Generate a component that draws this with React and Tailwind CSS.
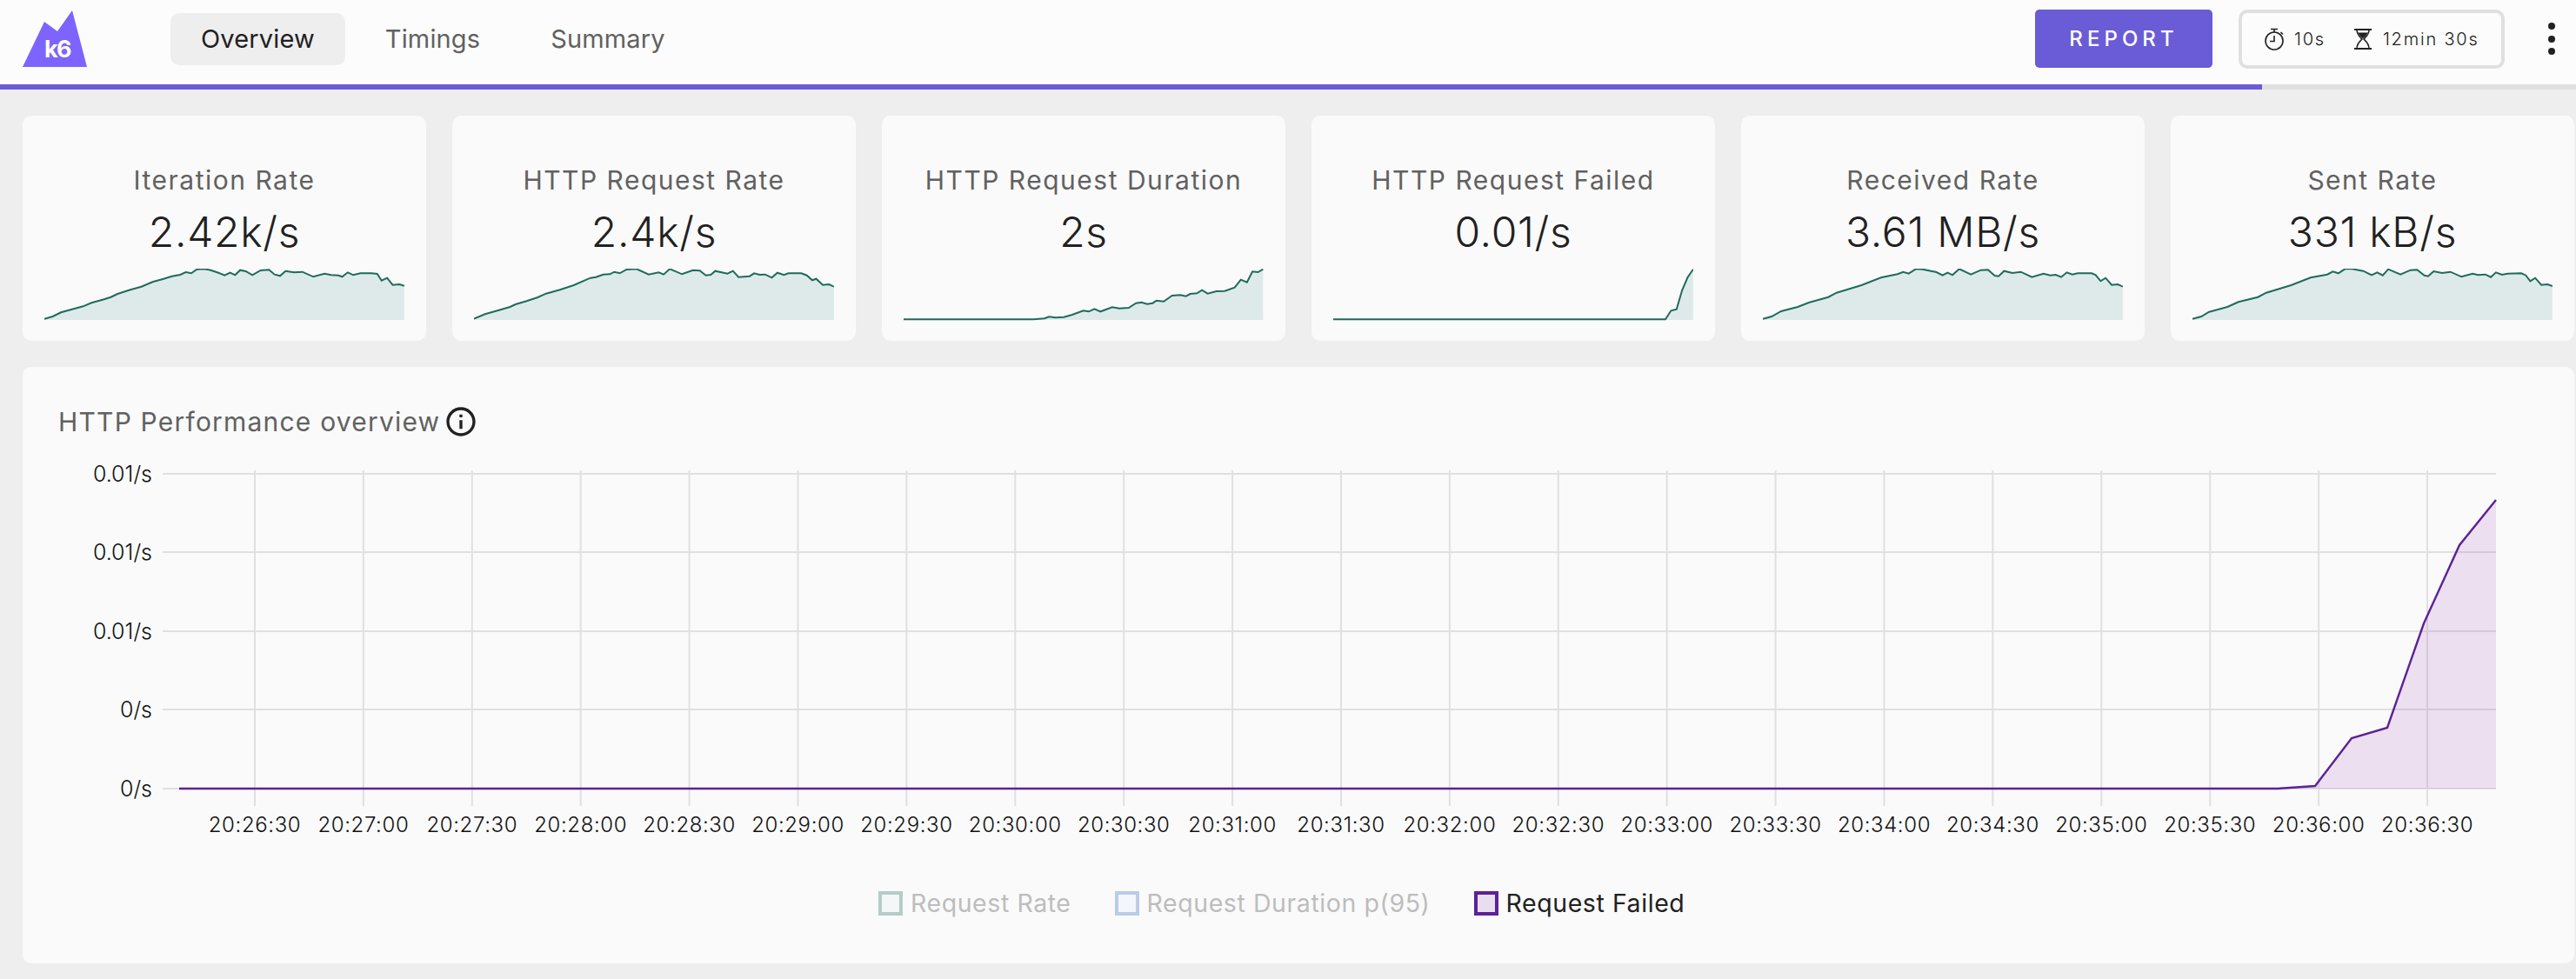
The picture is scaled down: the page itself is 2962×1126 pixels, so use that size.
import { MdInfoOutline } from "react-icons/md";

// sparkline points, measured off the picture: [x, y] in a 648x176 box
const ramp = (pts, dx) => pts.map(([x, y]) => [x - dx, y]);

const cards = [
  {
    title: "Iteration Rate",
    value: "2.42k/s",
    points: ramp([[80,738],[95,730],[110,716],[130,705],[150,695],[165,683],[185,672],[200,663],[212,652],[235,638],[255,627],[275,611],[295,600],[310,591],[325,586],[335,577],[345,581],[355,567],[368,566],[380,570],[395,580],[405,588],[415,579],[424,587],[433,570],[443,574],[455,587],[470,571],[485,569],[495,585],[505,590],[515,573],[530,578],[545,576],[565,593],[585,582],[597,587],[610,588],[617,593],[627,578],[637,587],[650,581],[670,581],[680,583],[688,606],[698,597],[708,621],[720,619],[729,624]], 80),
  },
  {
    title: "HTTP Request Rate",
    value: "2.4k/s",
    points: ramp([[855,738],[875,722],[900,708],[920,697],[930,688],[950,677],[970,664],[985,651],[1010,638],[1035,622],[1065,597],[1075,594],[1088,585],[1100,584],[1108,576],[1118,581],[1130,568],[1148,566],[1170,585],[1188,578],[1197,585],[1208,566],[1230,584],[1250,570],[1262,572],[1273,588],[1282,586],[1290,573],[1312,582],[1322,573],[1332,594],[1352,591],[1360,581],[1370,586],[1380,585],[1392,596],[1402,579],[1414,587],[1422,581],[1445,581],[1455,588],[1465,605],[1472,600],[1484,621],[1495,619],[1504,627]], 855),
  },
  {
    title: "HTTP Request Duration",
    value: "2s",
    points: ramp([[61,740],[295,740],[315,737],[323,731],[335,734],[350,732],[365,724],[385,710],[395,713],[405,704],[416,713],[437,698],[450,702],[467,700],[480,684],[490,681],[500,687],[510,684],[517,675],[530,678],[545,658],[560,656],[570,660],[578,652],[590,650],[599,639],[609,651],[625,643],[640,642],[658,630],[669,603],[680,612],[690,575],[700,577],[709,567]], 61),
  },
  {
    title: "HTTP Request Failed",
    value: "0.01/s",
    points: ramp([[836,740],[1435,740],[1445,710],[1455,705],[1465,640],[1475,595],[1485,567]], 836),
  },
  {
    title: "Received Rate",
    value: "3.61 MB/s",
    points: ramp([[102,738],[118,730],[135,712],[165,697],[185,682],[220,663],[235,648],[280,622],[315,596],[345,584],[355,576],[365,582],[378,566],[390,567],[415,577],[426,588],[435,579],[444,587],[456,566],[477,585],[495,570],[508,569],[520,589],[527,591],[537,573],[552,580],[567,576],[587,594],[608,582],[620,588],[630,586],[640,594],[650,578],[660,585],[670,581],[695,581],[702,587],[711,608],[720,597],[731,621],[742,619],[751,627]], 102),
  },
  {
    title: "Sent Rate",
    value: "331 kB/s",
    points: ramp([[877,738],[893,730],[907,714],[940,697],[960,680],[995,663],[1010,648],[1055,622],[1090,596],[1120,585],[1130,575],[1140,581],[1152,566],[1165,566],[1185,573],[1200,587],[1210,578],[1220,588],[1230,567],[1252,585],[1270,570],[1282,569],[1295,588],[1302,591],[1312,574],[1327,580],[1342,576],[1362,593],[1382,582],[1392,587],[1405,585],[1415,594],[1424,578],[1435,586],[1445,582],[1470,581],[1478,588],[1486,608],[1495,597],[1506,621],[1517,619],[1526,625]], 877),
  },
];

const timeLabels = [
  "20:26:30", "20:27:00", "20:27:30", "20:28:00", "20:28:30", "20:29:00", "20:29:30",
  "20:30:00", "20:30:30", "20:31:00", "20:31:30", "20:32:00", "20:32:30", "20:33:00",
  "20:33:30", "20:34:00", "20:34:30", "20:35:00", "20:35:30", "20:36:00", "20:36:30",
];

const gridRows = [
  { y: 545, label: "0.01/s" },
  { y: 635, label: "0.01/s" },
  { y: 726, label: "0.01/s" },
  { y: 816, label: "0/s" },
  { y: 907, label: "0/s" },
];

const failedLine = "206,907 2619,907 2662,904 2704,849 2745,837 2787,717 2828,627 2870,575";

function Sparkline({ points }) {
  const xy = points.map(([x, y]) => `${(x / 1.568).toFixed(1)},${((y - 565) / 3).toFixed(1)}`);
  const first = (points[0][0] / 1.568).toFixed(1);
  const last = (points[points.length - 1][0] / 1.568).toFixed(1);
  return (
    <svg viewBox="0 0 414 60" className="block w-[414px] h-[60px]">
      <polygon points={`${first},59 ${xy.join(" ")} ${last},59`} fill="#deeaea" />
      <polyline points={xy.join(" ")} fill="none" stroke="#1f6b5a" strokeWidth="2" />
    </svg>
  );
}

function StatCard({ title, value, points }) {
  return (
    <div className="flex flex-col items-center h-[259px] rounded-[10px] bg-[#fafafa] pt-[55px]">
      <div className="h-[38px] leading-[38px] text-[30px] tracking-[0.05em] text-[#616161]">{title}</div>
      <div className="mt-[11px] h-[60px] leading-[60px] text-[48px] font-[350] tracking-[0.015em] text-[#212121]">{value}</div>
      <div className="mt-[12px] w-[414px]">
        <Sparkline points={points} />
      </div>
    </div>
  );
}

function PerformanceChart() {
  return (
    <svg viewBox="26 525 2934 450" className="block w-[2934px] h-[450px]">
      {gridRows.map((row, i) => (
        <g key={i}>
          <line x1="187" x2="2870" y1={row.y} y2={row.y} stroke="#e0e0e0" strokeWidth="2" />
          <text x="175" y={row.y + 8.5} textAnchor="end" fontSize="25" fontWeight="350" fill="#111">{row.label}</text>
        </g>
      ))}
      {timeLabels.map((t, i) => {
        const x = 293 + i * 124.9;
        return (
          <g key={t}>
            <line x1={x} x2={x} y1="541" y2="927" stroke="#e0e0e0" strokeWidth="2" />
            <text x={x} y="957" textAnchor="middle" fontSize="24" fontWeight="350" letterSpacing="0.6" fill="#111">{t}</text>
          </g>
        );
      })}
      <polygon points={`${failedLine} 2870,907`} fill="#8e24aa" fillOpacity="0.12" />
      <polyline points={failedLine} fill="none" stroke="#5e2196" strokeWidth="2.4" />
    </svg>
  );
}

function LegendItem({ label, swatch, text }) {
  return (
    <div className="flex items-center gap-[9px]">
      <span className={`w-[28px] h-[28px] border-[4px] ${swatch}`} />
      <span className={`text-[28.5px] leading-[34px] tracking-[0.02em] ${text}`}>{label}</span>
    </div>
  );
}

function StopwatchIcon() {
  return (
    <svg viewBox="0 0 24 28" className="w-[24px] h-[28px] shrink-0" fill="none" stroke="#212121" strokeWidth="1.6">
      <circle cx="12" cy="16" r="10" />
      <path d="M8 2.5h8M12 3v3M19.5 6l2.500 2.500M12 10v6.500H7" />
    </svg>
  );
}

function HourglassIcon() {
  return (
    <svg viewBox="0 0 20 24" className="w-[20px] h-[24px] shrink-0" fill="none" stroke="#212121" strokeWidth="1.5">
      <path d="M0 1h20M0 23h20" strokeWidth="2" />
      <path d="M3 1c0 6 3 8 6 11-3 3-6 5-6 11M17 1c0 6-3 8-6 11 3 3 6 5 6 11" />
      <path d="M4.500 4.500h11c-1 3-3 4.500-5.500 7-2.500-2.500-4.500-4-5.500-7z" fill="#212121" stroke="none" />
    </svg>
  );
}

export default function App() {
  return (
    <div className="min-h-[1126px] bg-[#eeeeee] font-['Inter','Noto_Sans',sans-serif]">
      {/* Header */}
      <header className="flex items-center h-[97px] pb-[8px] pl-[26px] bg-[#fcfcfc]">
        <svg viewBox="0 0 74 65" className="w-[74px] h-[65px] shrink-0">
          <polygon points="0,65 25,13 40,24 57,0 74,65" fill="#7d64ff" />
          <text x="40" y="54" textAnchor="middle" fontSize="27" fontWeight="700" letterSpacing="-1.500" fill="#fff">k6</text>
        </svg>

        <nav className="flex items-center gap-[11px] ml-[96px] text-[29px] tracking-[0.005em]">
          <a className="flex items-center h-[60px] px-[35px] rounded-[10px] bg-[#eeeeee] text-[#212121]">Overview</a>
          <a className="flex items-center h-[60px] px-[35px] text-[#616161]">Timings</a>
          <a className="flex items-center h-[60px] px-[35px] text-[#616161]">Summary</a>
        </nav>

        <div className="flex items-center ml-auto">
          <button className="w-[204px] h-[67px] rounded-[5px] bg-[#6a5bd6] text-white text-[24px] font-medium tracking-[0.21em]">
            REPORT
          </button>
          <div className="flex items-center w-[306px] h-[68px] ml-[30px] pl-[25px] rounded-[10px] border-[4px] border-[#e0e0e0] text-[20px] font-[350] tracking-[0.09em] text-[#212121]">
            <StopwatchIcon />
            <span className="ml-[11px]">10s</span>
            <span className="ml-[33px]"><HourglassIcon /></span>
            <span className="ml-[13px]">12min 30s</span>
          </div>
          <div className="flex flex-col gap-[6.5px] ml-[50px] mr-[24px]">
            <span className="w-[8px] h-[8px] rounded-full bg-[#212121]" />
            <span className="w-[8px] h-[8px] rounded-full bg-[#212121]" />
            <span className="w-[8px] h-[8px] rounded-full bg-[#212121]" />
          </div>
        </div>
      </header>

      {/* Test progress */}
      <div className="h-[6px] bg-[#e0e0e0]">
        <div className="h-full w-[2601px] bg-[#6a5bd6]" />
      </div>

      <main className="pt-[30px] pl-[26px] pr-[2px] pb-[18px]">
        <div className="grid grid-cols-6 gap-[30px]">
          {cards.map((card) => (
            <StatCard key={card.title} {...card} />
          ))}
        </div>

        <section className="mt-[30px] h-[686px] rounded-[10px] bg-[#fafafa] pt-[46px]">
          <div className="flex items-center h-[34px] pl-[41px] text-[#616161]">
            <span className="text-[30px] tracking-[0.04em]">HTTP Performance overview</span>
            <MdInfoOutline size={40} className="ml-[4px] text-[#212121]" />
          </div>
          <div className="mt-[23px]">
            <PerformanceChart />
          </div>
          <div className="flex items-center gap-[50px] mt-[47px] pl-[984px]">
            <LegendItem label="Request Rate" swatch="border-[#b3cdc8] bg-[#f3f7f7]" text="text-[#bdbdbd]" />
            <LegendItem label="Request Duration p(95)" swatch="border-[#b9cce8] bg-[#f3f6fc]" text="text-[#bdbdbd]" />
            <LegendItem label="Request Failed" swatch="border-[#5e2196] bg-[#e9deef]" text="text-[#212121]" />
          </div>
        </section>
      </main>
    </div>
  );
}
